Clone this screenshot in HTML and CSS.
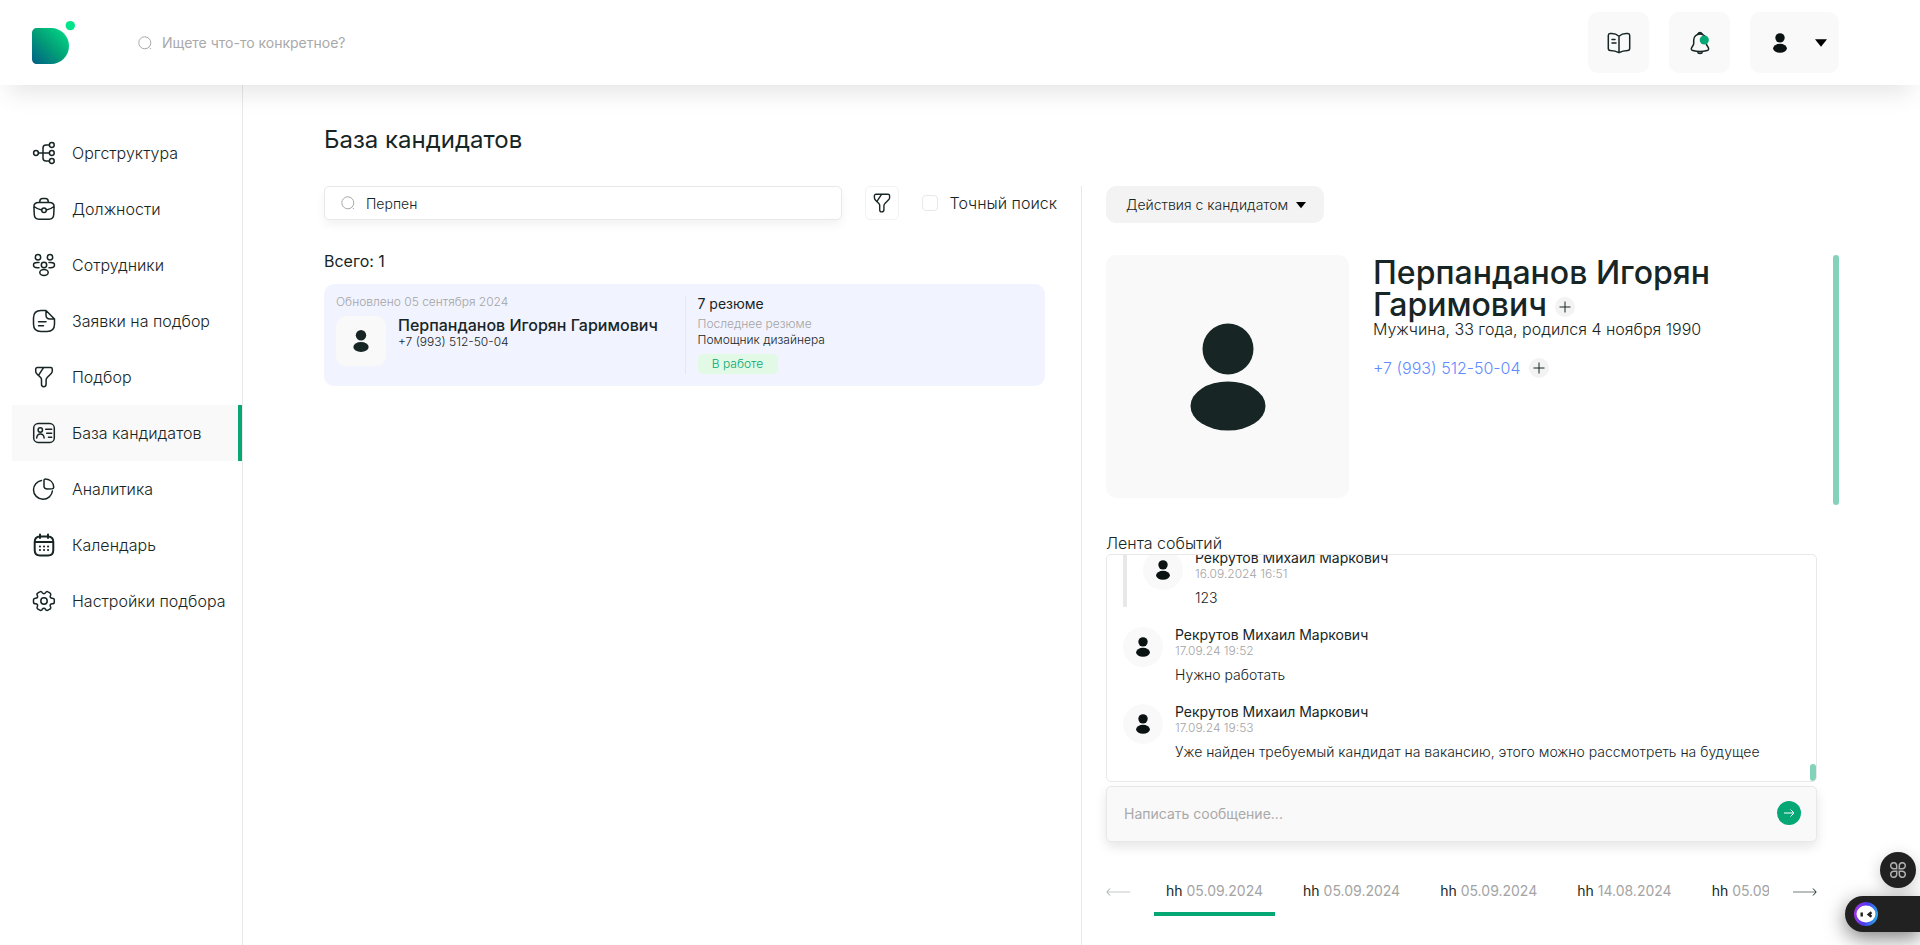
FILE: index.html
```
<!DOCTYPE html>
<html lang="ru">
<head>
  <meta charset="UTF-8">
  <meta name="viewport" content="width=device-width, initial-scale=1">
  <title>База кандидатов</title>
  <link rel="stylesheet" href="styles.css">
</head>
<body>

<!-- Shared icons -->
<svg class="sprite" aria-hidden="true">
  <symbol id="person" viewBox="0 0 76 108">
    <circle cx="38" cy="26" r="25.5"/>
    <ellipse cx="38" cy="83" rx="37.5" ry="24.5"/>
  </symbol>
  <symbol id="search" viewBox="0 0 14 14">
    <circle cx="6.8" cy="6.8" r="6"/>
    <path d="M11.8 12l1.2 1"/>
  </symbol>
  <symbol id="funnel" viewBox="0 0 24 24">
    <path d="M5.4 2.5h13.2c1 0 1.7.7 1.7 1.7v1.9c0 .9-.5 1.8-1.1 2.4l-4 4.1c-.7.6-1.1 1.5-1.1 2.3v4.1c0 1.5-1 2.7-2.4 2.7-1.3 0-2.2-1-2.2-2.4v-4.6c0-.7-.4-1.500-.9-2.100L5 8.900c-.7-.7-1.300-1.700-1.300-2.500V4.200c0-1 .7-1.700 1.700-1.700z"/>
    <path d="M11.500 2.700L6.500 10.300"/>
  </symbol>
  <symbol id="caret" viewBox="0 0 12 8">
    <path d="M0 .3h12L6 7.800z"/>
  </symbol>
</svg>

<header class="header">
  <a href="#" class="logo" aria-label="Главная">
    <svg width="46" height="47" viewBox="0 0 46 47">
      <defs>
        <linearGradient id="logoFill" x1="0" y1="1" x2="1" y2="0">
          <stop offset="0" stop-color="#005f86"/>
          <stop offset="0.500" stop-color="#03a077"/>
          <stop offset="1" stop-color="#00e187"/>
        </linearGradient>
      </defs>
      <path d="M5 9h14c10 0 18 8 18 18s-8 18-18 18H5c-3 0-5-2-5-5V14c0-3 2-5 5-5z" fill="url(#logoFill)"/>
      <circle cx="38.300" cy="6.600" r="4.700" fill="#00e58a"/>
    </svg>
  </a>
  <div class="header-search">
    <svg class="icon-search"><use href="#search"/></svg>
    <input type="text" placeholder="Ищете что-то конкретное?" aria-label="Поиск по сайту">
  </div>
  <div class="header-actions">
    <button type="button" class="tile" aria-label="База знаний">
      <svg class="icon" viewBox="0 0 24 24">
        <path d="M12 5.200C9.500 3 6 2.300 3.200 2.600c-1 .1-1.900.900-1.900 2v13c0 1.100.8 1.800 1.900 1.800 3.300.1 6.200.8 8.800 2.300 2.600-1.500 5.500-2.200 8.800-2.300 1.100 0 1.900-.7 1.900-1.800v-13c0-1.100-.9-1.900-1.900-2C18 2.300 14.500 3 12 5.200zM12 5.200v16.300M5 8.500h3M5 12h4"/>
      </svg>
    </button>
    <button type="button" class="tile" aria-label="Уведомления">
      <svg class="icon" viewBox="0 0 24 24">
        <path d="M12 3C8.300 3 5.700 5.700 5.700 9v3.200c0 .7-.3 1.700-.7 2.300l-1.300 2.100c-.8 1.300-.2 2.600 1.100 3 4.700 1.200 9.700 1.200 14.400 0 1.300-.4 1.800-1.800 1.100-3L19 14.500c-.4-.6-.7-1.600-.7-2.300V9c0-3.300-2.600-6-6.300-6zM9.800 2.900C10.300 2 11 1.500 12 1.500s1.700.5 2.200 1.400M9.200 20.500c.4 1.200 1.500 2 2.800 2s2.400-.8 2.800-2"/>
        <circle class="dot" cx="16.300" cy="9" r="4.600"/>
      </svg>
    </button>
    <button type="button" class="tile tile-user" aria-label="Профиль">
      <svg class="person"><use href="#person"/></svg>
      <svg class="caret"><use href="#caret"/></svg>
    </button>
  </div>
</header>

<div class="layout">
  <nav class="sidebar">
    <a href="#">
      <svg class="icon" viewBox="0 0 24 24">
        <circle cx="4" cy="12" r="2.400"/><circle cx="19.800" cy="4" r="2.400"/><circle cx="19.800" cy="12" r="2.400"/><circle cx="19.800" cy="20" r="2.400"/>
        <path d="M6.400 12h11M17.400 4H14c-2 0-3 1-3 3v10c0 2 1 3 3 3h3.400"/>
      </svg>
      Оргструктура
    </a>
    <a href="#">
      <svg class="icon" viewBox="0 0 24 24">
        <path d="M6.500 5.500h11c3 0 4.700 1.600 4.600 4.300l-.4 8c-.1 3-1.600 4.400-4.700 4.400H7c-3.100 0-4.600-1.400-4.700-4.400l-.4-8C1.800 7.100 3.500 5.500 6.500 5.500zM7.800 5.300V4.500c0-1.900.8-2.900 2.800-2.900h2.800c2 0 2.800 1 2.800 2.900v.8M22 9.500c-2.300 1.900-4.900 3-7.600 3.400M2 9.500c2.300 1.900 4.900 3 7.600 3.400"/>
        <circle cx="12" cy="13.300" r="2.300"/>
      </svg>
      Должности
    </a>
    <a href="#">
      <svg class="icon" viewBox="0 0 24 24">
        <circle cx="6" cy="4.300" r="2.700"/><circle cx="18" cy="4.300" r="2.700"/><circle cx="12" cy="12" r="2.700"/>
        <ellipse cx="12" cy="19.500" rx="4.200" ry="3"/>
        <path d="M7 9.500H5.200C3 9.500 1.500 10.500 1.500 12s1.500 2.700 3.700 2.700H7M17 9.500h1.800c2.200 0 3.700 1 3.700 2.500s-1.500 2.700-3.700 2.700H17"/>
      </svg>
      Сотрудники
    </a>
    <a href="#">
      <svg class="icon" viewBox="0 0 24 24">
        <path d="M14 1.500H9C4 1.500 1.500 4 1.500 9v6c0 5 2.500 7.500 7.500 7.500h6c5 0 7.500-2.500 7.500-7.500v-5zM14 1.500V6c0 3 1 4 4 4h4.500M6.500 12.700h7.500M6.500 16.700h5"/>
      </svg>
      Заявки на подбор
    </a>
    <a href="#">
      <svg class="icon"><use href="#funnel"/></svg>
      Подбор
    </a>
    <a href="#" class="active">
      <svg class="icon" viewBox="0 0 24 24">
        <rect x="1.700" y="2.600" width="20.600" height="18.800" rx="4.500"/>
        <circle cx="8.300" cy="9" r="2.200"/>
        <path d="M4.700 17c.2-2.500 1.500-4 3.700-4s3.500 1.500 3.700 4M13.700 8.300h6M14.700 12.300h5M16.500 16.300h3.200"/>
      </svg>
      База кандидатов
    </a>
    <a href="#">
      <svg class="icon" viewBox="0 0 24 24">
        <path d="M9.500 3.500C4.900 4.200 1.500 8.100 1.500 12.700c0 5.100 4.200 9.500 9.500 9.500 4.900 0 8.900-3.600 9.400-8.200"/>
        <path d="M12 3.500c0-1 .7-1.600 1.700-1.500 4.500.3 7.700 3.500 8 8 .1 1-.5 1.700-1.600 1.800l-4.600.2C13 12 12 11 12 9z"/>
      </svg>
      Аналитика
    </a>
    <a href="#">
      <svg class="icon icon-bold" viewBox="0 0 24 24">
        <path d="M8 1.500V5M16 1.500V5M3 9h18M8 3.500h8c3.500 0 5.300 1.800 5.300 5.500v8c0 3.700-1.800 5.500-5.300 5.500H8c-3.500 0-5.300-1.800-5.300-5.500V9c0-3.700 1.800-5.500 5.300-5.500zM7.900 13.500h.1M12 13.500h.1M16 13.500h.1M7.900 17h.1M12 17h.1M16 17h.1"/>
      </svg>
      Календарь
    </a>
    <a href="#">
      <svg class="icon" viewBox="0 0 24 24">
        <circle cx="12" cy="12" r="3.200"/>
        <path d="M1.500 12.900v-1.800c0-1 .9-1.900 2.100-1.900 1.800 0 2.600-1.300 1.700-2.800-.5-.9-.2-2.100.7-2.600l1.800-1c.8-.5 1.900-.2 2.300.6l.1.200c.9 1.500 2.500 1.500 3.400 0l.1-.2c.4-.8 1.500-1.100 2.300-.6l1.800 1c.9.500 1.200 1.700.7 2.600-.9 1.500-.1 2.800 1.700 2.800 1.200 0 2.100.9 2.100 1.900v1.800c0 1-.9 1.900-2.100 1.900-1.800 0-2.600 1.300-1.700 2.800.5.900.2 2.100-.7 2.600l-1.800 1c-.8.500-1.900.2-2.300-.6l-.1-.2c-.9-1.500-2.500-1.500-3.400 0l-.1.200c-.4.800-1.500 1.100-2.300.6l-1.800-1c-.9-.5-1.200-1.700-.7-2.600.9-1.500.1-2.800-1.700-2.800-1.200 0-2.100-.9-2.100-1.900z"/>
      </svg>
      Настройки подбора
    </a>
  </nav>

  <main class="main">
    <h1>База кандидатов</h1>

    <div class="columns">
      <section class="candidates">
        <div class="filters">
          <div class="search-box">
            <svg class="icon-search"><use href="#search"/></svg>
            <input type="text" value="Перпен" aria-label="Поиск кандидата">
          </div>
          <button type="button" class="filter-btn" aria-label="Фильтр">
            <svg class="icon"><use href="#funnel"/></svg>
          </button>
          <input type="checkbox" id="exact">
          <label for="exact">Точный поиск</label>
        </div>

        <p class="total">Всего: 1</p>

        <article class="card">
          <div class="card-person">
            <p class="muted">Обновлено 05 сентября 2024</p>
            <div class="card-row">
              <div class="card-photo"><svg class="person"><use href="#person"/></svg></div>
              <div>
                <h2>Перпанданов Игорян Гаримович</h2>
                <p class="small">+7 (993) 512-50-04</p>
              </div>
            </div>
          </div>
          <div class="card-resume">
            <p class="count">7 резюме</p>
            <p class="muted">Последнее резюме</p>
            <p class="small">Помощник дизайнера</p>
            <span class="badge">В работе</span>
          </div>
        </article>
      </section>

      <section class="details">
        <button type="button" class="actions-btn">
          Действия с кандидатом
          <svg class="caret"><use href="#caret"/></svg>
        </button>

        <div class="profile">
          <div class="profile-photo"><svg class="person"><use href="#person"/></svg></div>
          <div class="profile-info">
            <h2>Перпанданов Игорян Гаримович<button type="button" class="plus" aria-label="Добавить имя"><svg viewBox="0 0 12 12"><path d="M6 .5v11M.5 6h11"/></svg></button></h2>
            <p>Мужчина, 33 года, родился 4 ноября 1990</p>
            <div class="phone">
              <a href="tel:+79935125004">+7 (993) 512-50-04</a>
              <button type="button" class="plus" aria-label="Добавить телефон"><svg viewBox="0 0 12 12"><path d="M6 .5v11M.5 6h11"/></svg></button>
            </div>
          </div>
          <div class="profile-thumb"></div>
        </div>

        <h3>Лента событий</h3>
        <div class="feed">
          <div class="message reply">
            <div class="avatar"><svg class="person"><use href="#person"/></svg></div>
            <div>
              <p class="author">Рекрутов Михаил Маркович</p>
              <p class="time">16.09.2024 16:51</p>
              <p class="text">123</p>
            </div>
          </div>
          <div class="message">
            <div class="avatar"><svg class="person"><use href="#person"/></svg></div>
            <div>
              <p class="author">Рекрутов Михаил Маркович</p>
              <p class="time">17.09.24 19:52</p>
              <p class="text">Нужно работать</p>
            </div>
          </div>
          <div class="message">
            <div class="avatar"><svg class="person"><use href="#person"/></svg></div>
            <div>
              <p class="author">Рекрутов Михаил Маркович</p>
              <p class="time">17.09.24 19:53</p>
              <p class="text">Уже найден требуемый кандидат на вакансию, этого можно рассмотреть на будущее</p>
            </div>
          </div>
          <div class="feed-thumb"></div>
        </div>

        <form class="composer">
          <input type="text" placeholder="Написать сообщение..." aria-label="Сообщение">
          <button type="submit" aria-label="Отправить">
            <svg width="24" height="24" viewBox="0 0 24 24"><path d="M7 12h10M13.500 8.500L17 12l-3.500 3.500"/></svg>
          </button>
        </form>

        <div class="tabs">
          <button type="button" class="arrow arrow-off" aria-label="Назад"><svg width="24" height="10" viewBox="0 0 24 10"><path class="line" d="M1 5h23"/><path d="M4 1.500L.800 5 4 8.500"/></svg></button>
          <div class="tab-list">
            <button type="button" class="tab active">hh <span>05.09.2024</span></button>
            <button type="button" class="tab">hh <span>05.09.2024</span></button>
            <button type="button" class="tab">hh <span>05.09.2024</span></button>
            <button type="button" class="tab">hh <span>14.08.2024</span></button>
            <button type="button" class="tab">hh <span>05.09.2024</span></button>
          </div>
          <button type="button" class="arrow" aria-label="Вперёд"><svg width="24" height="10" viewBox="0 0 24 10"><path class="line" d="M0 5h23"/><path d="M20 1.500L23.200 5 20 8.500"/></svg></button>
        </div>
      </section>
    </div>
  </main>
</div>

<div class="widgets">
  <button type="button" class="widget-round" aria-label="Приложения">
    <svg width="16" height="16" viewBox="0 0 16 16"><path d="M6.700 6.700H3.800A3 3 0 1 1 6.700 3.800zM9.300 6.700V3.800a3 3 0 1 1 2.900 2.900zM6.700 9.300v2.900a3 3 0 1 1-2.900-2.900zM9.300 9.300h2.900a3 3 0 1 1-2.900 2.900z"/></svg>
  </button>
  <button type="button" class="widget-pill" aria-label="Помощник">
    <svg width="24" height="24" viewBox="0 0 24 24">
      <defs>
        <linearGradient id="botFill" x1="0" y1="0.600" x2="1" y2="0.800">
          <stop offset="0" stop-color="#a034e8"/>
          <stop offset="0.450" stop-color="#4a3cf0"/>
          <stop offset="1" stop-color="#25b5e8"/>
        </linearGradient>
      </defs>
      <circle cx="12" cy="12" r="12" fill="url(#botFill)"/>
      <ellipse cx="12" cy="12" rx="9.500" ry="8.500" fill="#fff"/>
      <path d="M7.700 10.500v4M17.500 10.300l-2.800 2.200 2.800 2.200" fill="none" stroke="#212121" stroke-width="2.400"/>
    </svg>
  </button>
</div>

</body>
</html>
```
FILE: styles.css
```
* {
  box-sizing: border-box;
}
body {
  margin: 0;
  min-height: 100vh;
  display: flex;
  flex-direction: column;
  font-family: Inter, "Noto Sans", sans-serif;
  font-size: 16px;
  font-weight: 300;
  color: #172525;
  background: #fff;
  overflow-x: hidden;
}
h1, h2, h3, p {
  margin: 0;
  font-weight: inherit;
}
a {
  color: inherit;
  text-decoration: none;
}
button {
  padding: 0;
  border: none;
  background: none;
  font: inherit;
  color: inherit;
  cursor: pointer;
}
input {
  border: none;
  background: none;
  font: inherit;
  color: inherit;
  outline: none;
}
input::placeholder {
  color: #a9a9a9;
  opacity: 1;
}
.sprite {
  display: none;
}
.icon {
  width: 24px;
  height: 24px;
  flex-shrink: 0;
  fill: none;
  stroke: #172525;
  stroke-width: 1.5;
  stroke-linecap: round;
  stroke-linejoin: round;
}
.icon-bold {
  stroke-width: 2;
}
.icon .dot {
  fill: #05a874;
  stroke: none;
}
.icon-search {
  width: 14px;
  height: 14px;
  flex-shrink: 0;
  fill: none;
  stroke: #a9a9a9;
}
.person {
  width: 14px;
  height: 20px;
  fill: #0a1212;
}
.caret {
  width: 12px;
  height: 8px;
}

/* Header */
.header {
  position: relative;
  z-index: 1;
  display: flex;
  align-items: center;
  height: 85px;
  padding: 0 81px 0 32px;
  background: #fff;
  box-shadow: 0 16px 24px -8px rgba(0, 0, 0, 0.1);
}
.logo {
  display: flex;
  width: 106px;
}
.header-search {
  display: flex;
  flex: 1;
  align-items: center;
  gap: 10px;
}
.header-search input {
  width: 300px;
  padding: 0;
  font-size: 14px;
  font-weight: 400;
}
.header-actions {
  display: flex;
  gap: 20px;
}
.tile {
  display: flex;
  align-items: center;
  justify-content: center;
  width: 61px;
  height: 61px;
  border-radius: 10px;
  background: #f9f9f9;
}
.tile-user {
  width: 89px;
  justify-content: space-between;
  padding: 0 12px 0 23px;
}

/* Sidebar */
.layout {
  display: flex;
  flex: 1;
}
.sidebar {
  width: 243px;
  flex-shrink: 0;
  padding: 40px 0 40px 12px;
  border-right: 1px solid #e8e8e8;
}
.sidebar a {
  display: flex;
  align-items: center;
  gap: 16px;
  height: 56px;
  padding-left: 20px;
  border-right: 4px solid transparent;
  white-space: nowrap;
}
.sidebar .active {
  background: #f9f9f9;
  border-color: #05a874;
}

/* Main */
.main {
  display: flex;
  flex: 1;
  flex-direction: column;
  min-width: 0;
  padding: 40px 81px 0;
}
h1 {
  margin-bottom: 31px;
  font-size: 24px;
  font-weight: 400;
  line-height: 30px;
}
.columns {
  display: flex;
  flex: 1;
}
.candidates {
  flex: 1 1 0;
  min-width: 0;
  padding-right: 24px;
  border-right: 1px solid #e8e8e8;
}
.filters {
  display: flex;
  align-items: center;
  height: 34px;
}
.search-box {
  display: flex;
  flex: 1;
  align-items: center;
  gap: 11px;
  height: 34px;
  padding: 0 16px;
  border: 1px solid #e8e8e8;
  border-radius: 5px;
  box-shadow: 0 5px 10px rgba(0, 0, 0, 0.05);
}
.search-box input {
  flex: 1;
  min-width: 0;
  padding: 0;
  font-size: 14px;
}
.filter-btn {
  display: flex;
  align-items: center;
  justify-content: center;
  width: 34px;
  height: 34px;
  margin: 0 23px;
  border: 1px solid #f2f2f2;
  border-radius: 5px;
}
.filter-btn .icon {
  width: 22px;
  height: 22px;
}
.filters input[type="checkbox"] {
  appearance: none;
  width: 16px;
  height: 16px;
  margin: 0 12px 0 0;
  border: 1px solid #e8e8e8;
  border-radius: 4px;
}
.filters input[type="checkbox"]:checked {
  background: #05a874;
}
.total {
  margin: 31px 0 13px;
  font-weight: 400;
  line-height: 20px;
}

/* Candidate card */
.card {
  display: flex;
  margin-right: 12px;
  padding: 12px;
  border-radius: 10px;
  background: #f1f3ff;
}
.card-person, .card-resume {
  width: 50%;
}
.card-resume {
  padding-left: 12px;
  border-left: 1px solid #e8e8e8;
}
.muted, .small {
  font-size: 12px;
  line-height: 16px;
}
.muted {
  margin-top: -2px;
  color: #a4a4a4;
}
.card-row {
  display: flex;
  gap: 12px;
  margin-top: 6px;
}
.card-photo {
  display: flex;
  align-items: center;
  justify-content: center;
  width: 50px;
  height: 50px;
  flex-shrink: 0;
  border-radius: 10px;
  background: #f9f9f9;
}
.card-photo .person {
  width: 16px;
  height: 22px;
  fill: #172525;
}
.card h2 {
  font-size: 16px;
  font-weight: 500;
  line-height: 18px;
}
.count {
  margin-bottom: 6px;
  font-size: 14px;
  font-weight: 400;
  line-height: 16px;
}
.badge {
  display: block;
  width: 80px;
  margin-top: 6px;
  border-radius: 5px;
  background: #e2f9e5;
  color: #05a874;
  font-size: 12px;
  line-height: 20px;
  text-align: center;
}

/* Candidate details */
.details {
  display: flex;
  flex: 1 1 0;
  flex-direction: column;
  min-width: 0;
  padding: 0 0 29px 24px;
}
.actions-btn {
  display: flex;
  align-items: center;
  align-self: flex-start;
  gap: 8px;
  height: 37px;
  padding: 0 18px 0 20px;
  border-radius: 10px;
  background: #f3f3f3;
  font-size: 14px;
}
.actions-btn .caret {
  width: 10px;
}
.profile {
  display: flex;
  gap: 24px;
  height: 250px;
  margin: 32px 0 28px;
}
.profile-photo {
  display: flex;
  align-items: center;
  justify-content: center;
  width: 243px;
  height: 243px;
  flex-shrink: 0;
  border-radius: 10px;
  background: #f9f9f9;
}
.profile-photo .person {
  width: 76px;
  height: 108px;
  fill: #172525;
}
.profile-info {
  flex: 1;
  min-width: 0;
  padding-top: 2px;
}
.profile-info h2 {
  max-width: 370px;
  font-size: 32px;
  font-weight: 500;
  line-height: 32px;
}
.profile-info h2 .plus {
  margin-left: 8px;
}
.profile-info p {
  line-height: 16px;
}
.phone {
  display: flex;
  align-items: center;
  gap: 8px;
  margin-top: 21px;
  color: #5f8bff;
}
.plus {
  display: inline-flex;
  align-items: center;
  justify-content: center;
  width: 20px;
  height: 20px;
  border-radius: 50%;
  background: #f3f3f3;
  vertical-align: middle;
}
.plus svg {
  width: 12px;
  height: 12px;
  stroke: #172525;
}
.profile-thumb {
  width: 6px;
  border-radius: 3px;
  background: #82d3b9;
}
h3 {
  font-size: 16px;
  line-height: 20px;
}

/* Event feed */
.feed {
  position: relative;
  display: flex;
  flex: 1 1 0;
  flex-direction: column;
  justify-content: flex-end;
  gap: 20px;
  min-height: 160px;
  margin: 1px 22px 4px 0;
  padding: 0 16px 20px;
  border: 1px solid #e8e8e8;
  border-radius: 5px;
  overflow: hidden;
}
.message {
  display: flex;
  gap: 12px;
}
.reply {
  padding-left: 16px;
  border-left: 4px solid #e8e8e8;
}
.avatar {
  display: flex;
  align-items: center;
  justify-content: center;
  width: 40px;
  height: 40px;
  flex-shrink: 0;
  border-radius: 50%;
  background: #f9f9f9;
}
.author {
  font-size: 14px;
  font-weight: 400;
  line-height: 16px;
}
.time {
  font-size: 12px;
  line-height: 16px;
  color: #a4a4a4;
}
.text {
  margin-top: 7px;
  font-size: 14px;
  line-height: 18px;
}
.feed-thumb {
  position: absolute;
  right: 0;
  bottom: 0;
  width: 6px;
  height: 17px;
  border-radius: 3px;
  background: #82d3b9;
}
.composer {
  display: flex;
  align-items: center;
  height: 56px;
  margin-right: 22px;
  padding: 0 15px 2px 17px;
  border: 1px solid #e8e8e8;
  border-radius: 5px;
  background: #f9f9f9;
  box-shadow: 0 5px 12px rgba(0, 0, 0, 0.1);
}
.composer input {
  flex: 1;
  min-width: 0;
  padding: 0;
  font-size: 14px;
  font-weight: 400;
}
.composer button {
  display: flex;
  border-radius: 50%;
  background: #05a874;
}
.composer svg {
  fill: none;
  stroke: #fff;
}

/* Resume tabs */
.tabs {
  display: flex;
  align-items: center;
  gap: 24px;
  margin: 26px 22px 0 0;
}
.tab-list {
  display: flex;
  flex: 1;
  gap: 16px;
  min-width: 0;
  overflow: hidden;
}
.tab {
  height: 48px;
  padding: 0 12px;
  flex-shrink: 0;
  border-bottom: 4px solid transparent;
  font-size: 14px;
  font-weight: 400;
}
.tab span {
  color: #a4a4a4;
}
.tab.active {
  border-color: #05a874;
}
.arrow {
  display: flex;
}
.arrow svg {
  fill: none;
  stroke: #172525;
}
.arrow .line {
  opacity: 0.6;
}
.arrow-off {
  opacity: 0.4;
}

/* Floating widgets */
.widgets {
  position: fixed;
  right: 0;
  bottom: 13px;
  z-index: 2;
  display: flex;
  flex-direction: column;
  align-items: flex-end;
  gap: 8px;
}
.widget-round, .widget-pill {
  display: flex;
  align-items: center;
  height: 36px;
  background: #212121;
}
.widget-round {
  justify-content: center;
  width: 36px;
  margin-right: 4px;
  border-radius: 50%;
  box-shadow: 0 4px 16px rgba(0, 0, 0, 0.2);
}
.widget-round svg {
  fill: none;
  stroke: #b0b0b0;
  stroke-width: 1.5;
}
.widget-pill {
  width: 75px;
  padding-left: 9px;
  border-radius: 18px 0 0 18px;
  box-shadow: 0 6px 20px rgba(0, 0, 0, 0.5);
}
```
